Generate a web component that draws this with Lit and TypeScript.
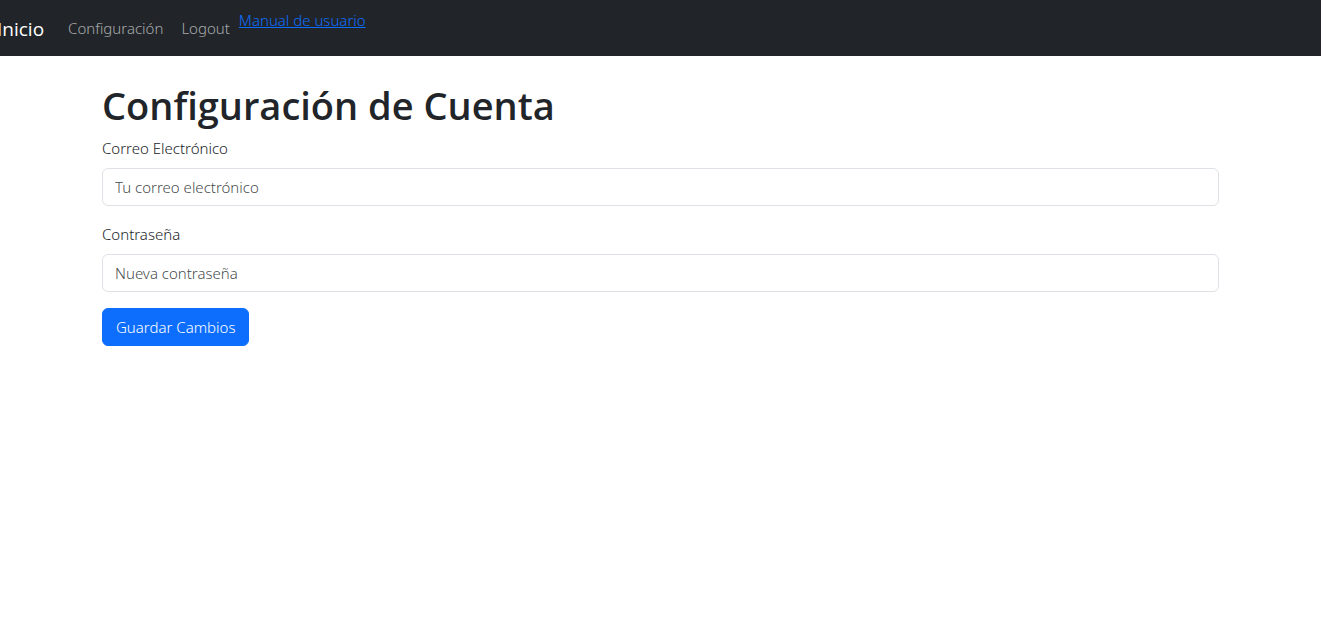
import { LitElement, html, css } from "lit";
import { customElement } from "lit/decorators.js";

@customElement("app-root")
export class AppRoot extends LitElement {
  static styles = css`
    :host {
      display: block;
      min-height: 100vh;
      background: #fff;
      color: #212529;
      font-family: "Noto Sans", "Open Sans", sans-serif;
      font-size: 15px;
      font-weight: 300;
      line-height: 24px;
      overflow-x: hidden;
    }
    *, *::before, *::after { box-sizing: border-box; }
    .navbar {
      display: flex;
      align-items: center;
      min-height: 56px;
      padding: 8px 0;
      background: #212529;
    }
    .brand {
      margin: 0 15px 0 -3px;
      padding-top: 2px;
      color: #fff;
      font-family: "Open Sans", "Noto Sans", sans-serif;
      font-size: 19px;
      font-weight: 400;
      line-height: 30px;
      text-decoration: none;
    }
    .nav {
      display: flex;
      margin: 0;
      padding: 0;
      list-style: none;
    }
    .nav-link {
      display: block;
      padding: 8px 9px;
      color: rgba(255, 255, 255, 0.6);
      text-decoration: none;
    }
    .manual { color: #0d6efd; text-decoration: underline; }
    .container {
      max-width: 1141px;
      margin: 0 auto;
      padding: 25px 12px 0;
    }
    .title {
      margin: 0 0 7px;
      font-family: "Open Sans", "Noto Sans", sans-serif;
      font-size: 38px;
      font-weight: 600;
      line-height: 48px;
    }
    .field { margin-bottom: 16px; }
    .label { display: inline-block; margin-bottom: 8px; }
    .input {
      display: block;
      width: 100%;
      padding: 6px 12px;
      border: 1px solid #dee2e6;
      border-radius: 6px;
      background: #fff;
      color: #212529;
      font: inherit;
    }
    .input::placeholder { color: rgba(33, 37, 41, 0.85); opacity: 1; }
    .button {
      padding: 6px 13px;
      border: 1px solid #0d6efd;
      border-radius: 6px;
      background: #0d6efd;
      color: #fff;
      font: inherit;
      cursor: pointer;
    }
  `;

  render() {
    return html`
      <nav class="navbar">
        <a class="brand" href="#">Inicio</a>
        <ul class="nav">
          <li><a class="nav-link" href="#">Configuración</a></li>
          <li><a class="nav-link" href="#">Logout</a></li>
          <li><a class="manual" href="#">Manual de usuario</a></li>
        </ul>
      </nav>
      <main class="container">
        <h1 class="title">Configuración de Cuenta</h1>
        <form @submit=${(e: Event) => e.preventDefault()}>
          <div class="field">
            <label class="label" for="email">Correo Electrónico</label>
            <input class="input" id="email" type="email" placeholder="Tu correo electrónico" />
          </div>
          <div class="field">
            <label class="label" for="password">Contraseña</label>
            <input class="input" id="password" type="password" placeholder="Nueva contraseña" />
          </div>
          <button class="button" type="submit">Guardar Cambios</button>
        </form>
      </main>
    `;
  }
}
